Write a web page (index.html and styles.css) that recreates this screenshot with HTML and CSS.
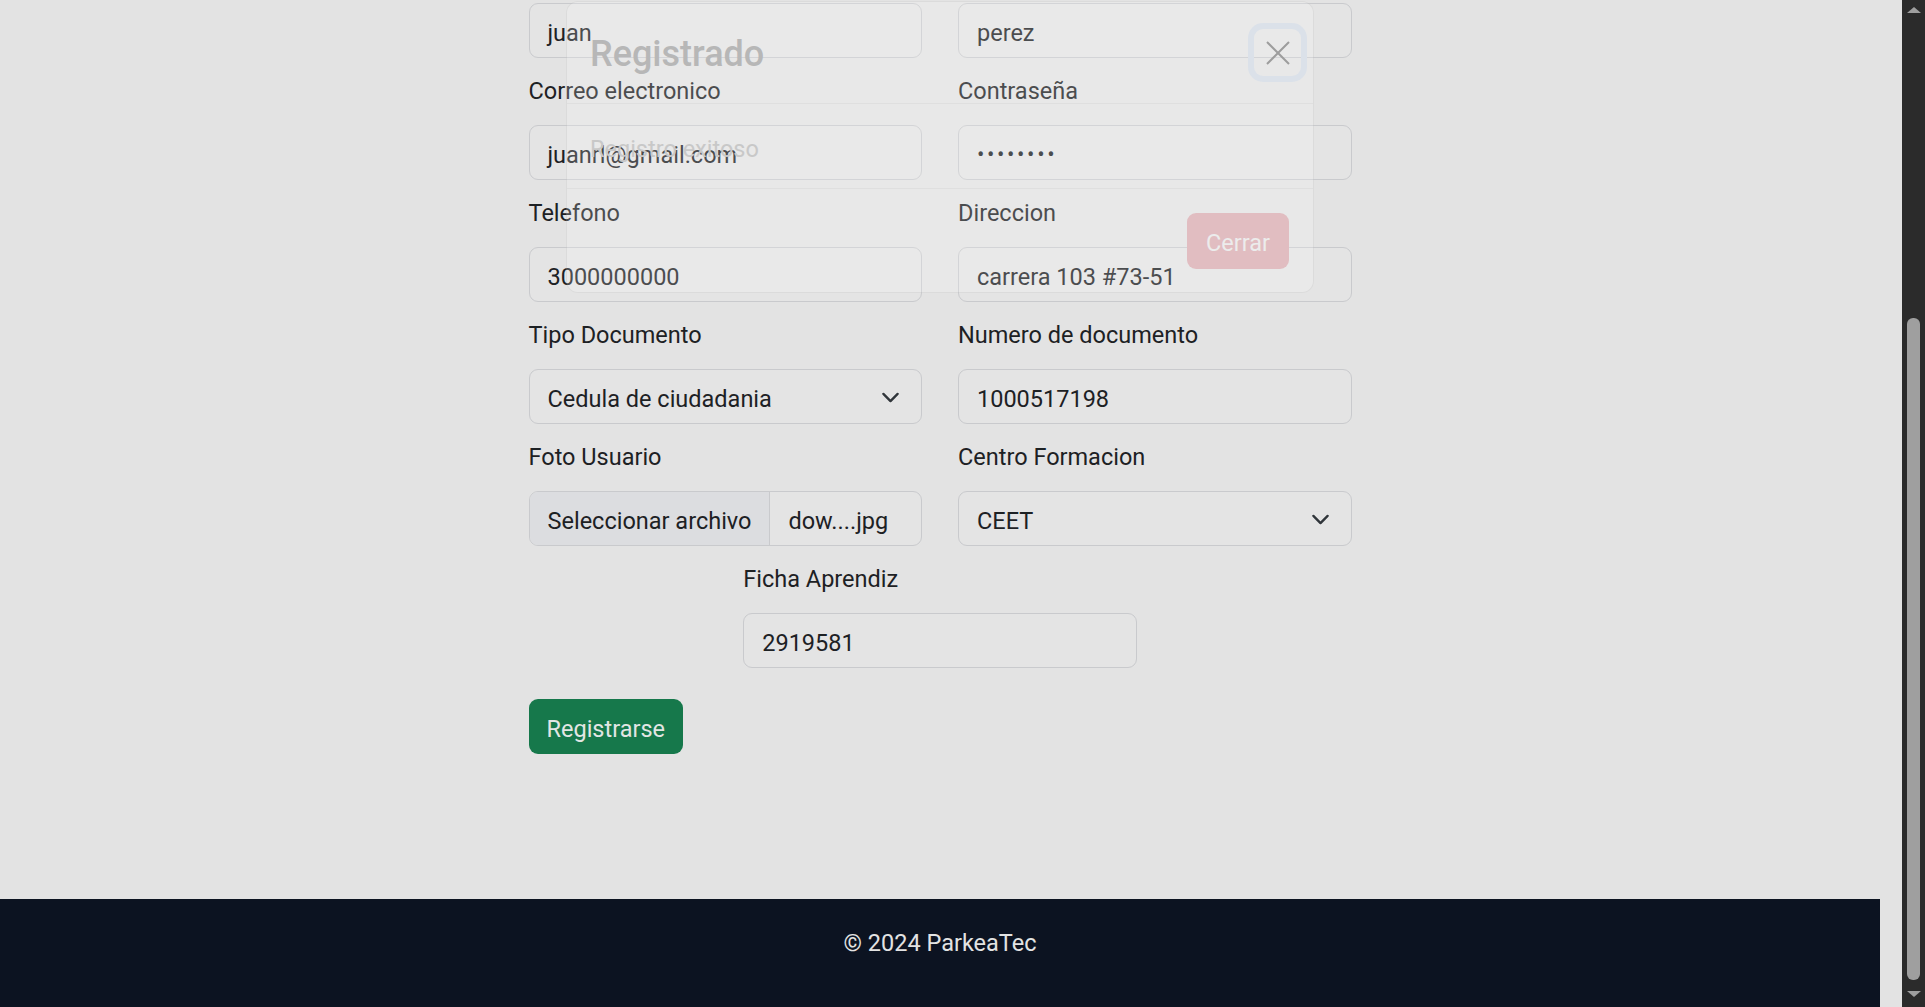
FILE: index.html
```html
<!DOCTYPE html>
<html lang="es">
<head>
<meta charset="utf-8">
<title>Registro - ParkeaTec</title>
<link rel="stylesheet" href="styles.css">
</head>
<body>
<div class="screen">
  <div class="page">
    <main class="main">
      <form class="form">
        <div class="grid">
          <div class="field"><div class="control">juan</div></div>
          <div class="field"><div class="control">perez</div></div>
          <div class="field"><label>Correo electronico</label><div class="control">juanrl@gmail.com</div></div>
          <div class="field"><label>Contraseña</label><div class="control dots">••••••••</div></div>
          <div class="field"><label>Telefono</label><div class="control">3000000000</div></div>
          <div class="field"><label>Direccion</label><div class="control">carrera 103 #73-51</div></div>
          <div class="field"><label>Tipo Documento</label>
            <div class="control select"><span>Cedula de ciudadania</span>
              <svg class="chev" viewBox="0 0 16 16" width="19" height="19"><path d="M2 5l6 6 6-6" fill="none" stroke="#30353a" stroke-width="2" stroke-linecap="round" stroke-linejoin="round"/></svg>
            </div>
          </div>
          <div class="field"><label>Numero de documento</label><div class="control">1000517198</div></div>
          <div class="field"><label>Foto Usuario</label>
            <div class="control file"><span class="file-btn">Seleccionar archivo</span><span class="file-name">dow....jpg</span></div>
          </div>
          <div class="field"><label>Centro Formacion</label>
            <div class="control select"><span>CEET</span>
              <svg class="chev" viewBox="0 0 16 16" width="19" height="19"><path d="M2 5l6 6 6-6" fill="none" stroke="#30353a" stroke-width="2" stroke-linecap="round" stroke-linejoin="round"/></svg>
            </div>
          </div>
          <div class="field field-center"><label>Ficha Aprendiz</label><div class="control">2919581</div></div>
        </div>
        <div class="actions"><button type="button" class="submit">Registrarse</button></div>
      </form>

      <div class="modal-layer">
        <div class="modal">
          <div class="modal-header">
            <h5 class="modal-title">Registrado</h5>
            <button type="button" class="btn-close" aria-label="Close">
              <svg viewBox="0 0 24 24" width="24" height="24"><path d="M1 1L23 23M23 1L1 23" stroke="#9d9d9d" stroke-width="2" fill="none"/></svg>
            </button>
          </div>
          <div class="modal-body">Registro exitoso</div>
          <div class="modal-footer"><button type="button" class="btn-danger">Cerrar</button></div>
        </div>
      </div>
    </main>
    <footer class="footer">© 2024 ParkeaTec</footer>
  </div>
  <div class="gutter"></div>
  <div class="scrollbar">
    <div class="arrow"><svg viewBox="0 0 14 6" width="14" height="6"><path d="M0 6L7 0L14 6Z" fill="#9f9f9f"/></svg></div>
    <div class="thumb"></div>
    <div class="arrow arrow-down"><svg viewBox="0 0 14 6" width="14" height="6"><path d="M0 0L7 6L14 0Z" fill="#9f9f9f"/></svg></div>
  </div>
</div>
</body>
</html>
```

FILE: styles.css
```css
* { box-sizing: border-box; }
html, body { margin: 0; padding: 0; height: 100%; }
body {
  font-family: Roboto, "Liberation Sans", Arial, sans-serif;
  font-size: 23.5px;
  color: #1d2124;
  background: #e3e3e3;
  overflow: hidden;
}
.screen { display: flex; width: 1925px; height: 1007px; }
.page { width: 1880px; flex: none; display: flex; flex-direction: column; }
.main { position: relative; flex: 1; overflow: hidden; }

.form { width: 823px; margin: 3px auto 0; }
.grid { display: grid; grid-template-columns: 1fr 1fr; column-gap: 36px; row-gap: 16px; }
.field label { display: block; line-height: 34px; margin-bottom: 17px; }
.field-center { grid-column: 1 / -1; justify-self: center; width: 393.5px; }
.control {
  height: 55px;
  border: 1px solid #c9cacd;
  border-radius: 9px;
  padding: 5px 18px 0;
  display: flex;
  align-items: center;
  line-height: 34px;
  background: #e4e4e4;
  white-space: nowrap;
  overflow: hidden;
}
.dots { letter-spacing: 2.6px; font-size: 22px; }
.select { justify-content: space-between; padding-right: 21px; }
.chev { flex: none; margin-top: -4px; }
.file { padding: 0; }
.file-btn {
  height: 100%;
  display: flex;
  align-items: center;
  padding: 5px 18px 0;
  background: #dcdde0;
  border-right: 1px solid #c9cacd;
}
.file-name { padding: 5px 18px 0; }

.actions { margin-top: 31px; }
.submit {
  height: 55px;
  padding: 4px 18px 0;
  border: none;
  border-radius: 9px;
  background: #16784b;
  color: #e2e6e4;
  font: inherit;
  line-height: 34px;
}

.footer {
  height: 108px;
  flex: none;
  background: #0c1321;
  color: #e3e3e3;
  display: flex;
  justify-content: center;
  align-items: flex-start;
  padding-top: 27px;
  line-height: 34px;
}
.gutter { width: 22px; flex: none; background: #e3e3e3; }
.scrollbar {
  width: 23px;
  flex: none;
  background: #2b2b2b;
  display: flex;
  flex-direction: column;
  align-items: center;
}
.arrow { height: 20px; display: flex; align-items: center; justify-content: center; flex: none; }
.arrow-down { height: 27px; align-items: center; }
.thumb { width: 13px; height: 662px; margin-top: 298px; background: #9f9f9f; border-radius: 6px; flex: none; }

/* modal (fading in) */
.modal-layer {
  position: absolute;
  top: 0; left: 0; right: 0;
  display: flex;
  justify-content: center;
}
.modal {
  width: 748px;
  margin-top: 1px;
  background: rgba(255, 255, 255, 0.2);
  border: 1px solid rgba(0, 0, 0, 0.06);
  border-radius: 12px;
}
.modal-header {
  height: 102px;
  display: flex;
  align-items: center;
  justify-content: space-between;
  padding: 0 12px 0 23px;
  border-bottom: 1px solid rgba(0, 0, 0, 0.035);
}
.modal-title { margin: 5px 0 0; font-size: 36px; font-weight: 500; color: #b7b7b7; line-height: 1.2; }
.btn-close {
  width: 47px; height: 47px;
  padding: 0;
  border: none;
  border-radius: 9px;
  background: transparent;
  box-shadow: 0 0 0 6px #dbe1e9;
  display: flex; align-items: center; justify-content: center;
}
.modal-body {
  height: 85px;
  display: flex;
  align-items: center;
  padding: 5px 23px 0;
  color: #c8c8c8;
  border-bottom: 1px solid rgba(0, 0, 0, 0.035);
}
.modal-footer {
  height: 103px;
  display: flex;
  justify-content: flex-end;
  align-items: flex-start;
  padding: 24px 24px 0;
}
.btn-danger {
  width: 102px; height: 56px;
  border: none;
  border-radius: 9px;
  background: #e1bdc1;
  color: #ececec;
  font: inherit;
  padding-top: 4px;
}
```
